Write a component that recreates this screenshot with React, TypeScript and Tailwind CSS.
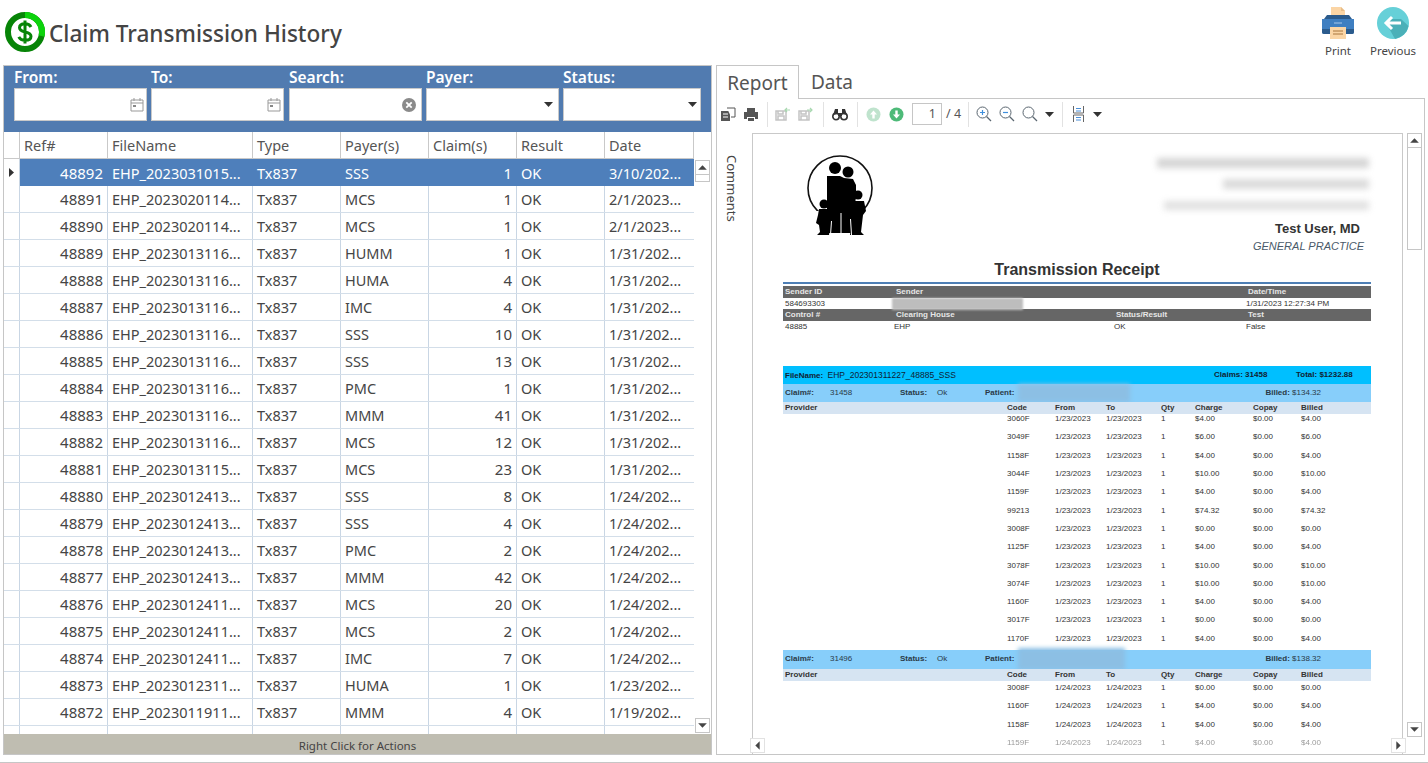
type Row = { ref: number; file: string; payer: string; claims: number; date: string };

const ROWS: Row[] = [
  { ref: 48892, file: "EHP_2023031015...", payer: "SSS", claims: 1, date: "3/10/202..." },
  { ref: 48891, file: "EHP_2023020114...", payer: "MCS", claims: 1, date: "2/1/2023..." },
  { ref: 48890, file: "EHP_2023020114...", payer: "MCS", claims: 1, date: "2/1/2023..." },
  { ref: 48889, file: "EHP_2023013116...", payer: "HUMM", claims: 1, date: "1/31/202..." },
  { ref: 48888, file: "EHP_2023013116...", payer: "HUMA", claims: 4, date: "1/31/202..." },
  { ref: 48887, file: "EHP_2023013116...", payer: "IMC", claims: 4, date: "1/31/202..." },
  { ref: 48886, file: "EHP_2023013116...", payer: "SSS", claims: 10, date: "1/31/202..." },
  { ref: 48885, file: "EHP_2023013116...", payer: "SSS", claims: 13, date: "1/31/202..." },
  { ref: 48884, file: "EHP_2023013116...", payer: "PMC", claims: 1, date: "1/31/202..." },
  { ref: 48883, file: "EHP_2023013116...", payer: "MMM", claims: 41, date: "1/31/202..." },
  { ref: 48882, file: "EHP_2023013116...", payer: "MCS", claims: 12, date: "1/31/202..." },
  { ref: 48881, file: "EHP_2023013115...", payer: "MCS", claims: 23, date: "1/31/202..." },
  { ref: 48880, file: "EHP_2023012413...", payer: "SSS", claims: 8, date: "1/24/202..." },
  { ref: 48879, file: "EHP_2023012413...", payer: "SSS", claims: 4, date: "1/24/202..." },
  { ref: 48878, file: "EHP_2023012413...", payer: "PMC", claims: 2, date: "1/24/202..." },
  { ref: 48877, file: "EHP_2023012413...", payer: "MMM", claims: 42, date: "1/24/202..." },
  { ref: 48876, file: "EHP_2023012411...", payer: "MCS", claims: 20, date: "1/24/202..." },
  { ref: 48875, file: "EHP_2023012411...", payer: "MCS", claims: 2, date: "1/24/202..." },
  { ref: 48874, file: "EHP_2023012411...", payer: "IMC", claims: 7, date: "1/24/202..." },
  { ref: 48873, file: "EHP_2023012311...", payer: "HUMA", claims: 1, date: "1/23/202..." },
  { ref: 48872, file: "EHP_2023011911...", payer: "MMM", claims: 4, date: "1/19/202..." },
];

type Item = [string, string, string, string];

const ITEMS_A: Item[] = [
  ["3060F", "$4.00", "$0.00", "$4.00"],
  ["3049F", "$6.00", "$0.00", "$6.00"],
  ["1158F", "$4.00", "$0.00", "$4.00"],
  ["3044F", "$10.00", "$0.00", "$10.00"],
  ["1159F", "$4.00", "$0.00", "$4.00"],
  ["99213", "$74.32", "$0.00", "$74.32"],
  ["3008F", "$0.00", "$0.00", "$0.00"],
  ["1125F", "$4.00", "$0.00", "$4.00"],
  ["3078F", "$10.00", "$0.00", "$10.00"],
  ["3074F", "$10.00", "$0.00", "$10.00"],
  ["1160F", "$4.00", "$0.00", "$4.00"],
  ["3017F", "$0.00", "$0.00", "$0.00"],
  ["1170F", "$4.00", "$0.00", "$4.00"],
];

const ITEMS_B: Item[] = [
  ["3008F", "$0.00", "$0.00", "$0.00"],
  ["1160F", "$4.00", "$0.00", "$4.00"],
  ["1158F", "$4.00", "$0.00", "$4.00"],
  ["1159F", "$4.00", "$0.00", "$4.00"],
];

const CaretDown = () => (
  <svg width="9" height="5" viewBox="0 0 9 5" className="shrink-0">
    <path d="M0 0h9L4.5 5z" fill="#333" />
  </svg>
);

const Sep = () => <div className="w-px h-[25px] bg-[#e2e2e2] shrink-0" />;

const DollarLogo = () => (
  <svg width="40" height="40" viewBox="0 0 40 40" className="shrink-0">
    <circle cx="20" cy="20" r="17" fill="#fff" stroke="#078407" strokeWidth="6" />
    <path d="M20 3a17 17 0 0 1 16.5 21" fill="none" stroke="#0cd30c" strokeWidth="6" />
    <path
      d="M26 15c-1-2-3-3.200-6-3.200-3.500 0-5.500 1.700-5.500 4 0 5.600 11.500 2.800 11.500 8.500 0 2.600-2.300 4-5.800 4-3.200 0-5.400-1.200-6.400-3.400M20 8.500v23"
      fill="none"
      stroke="#078407"
      strokeWidth="3"
    />
  </svg>
);

const PrintIcon = () => (
  <svg width="32" height="32" viewBox="0 0 32 32">
    <path d="M9 0h10l4 4v10H9z" fill="#fbd5a5" />
    <path d="M19 0l4 4h-4z" fill="#e8bd88" />
    <path d="M5 8h22l3 4H2z" fill="#2b5b8c" />
    <path d="M0 12h32v13a2 2 0 0 1-2 2H2a2 2 0 0 1-2-2z" fill="#3f7fc1" />
    <path d="M0 22h32v3a2 2 0 0 1-2 2H2a2 2 0 0 1-2-2z" fill="#2b5b8c" />
    <path d="M8 20h16v12H8z" fill="#fbd5a5" />
    <path d="M11 24h10M11 27h10" stroke="#a9773f" />
    <path d="M12 16h8" stroke="#a9c9ea" />
  </svg>
);

const PreviousIcon = () => (
  <svg width="32" height="32" viewBox="0 0 32 32">
    <circle cx="16" cy="16" r="16" fill="#66d0d8" />
    <path d="M9 16l9 15.900A16 16 0 0 0 31.500 19L24 12H14z" fill="#4bb0b8" />
    <path d="M15 10l-6 6 6 6M10 16h14" fill="none" stroke="#fff" strokeWidth="3" />
  </svg>
);

const CalendarIcon = () => (
  <svg width="14" height="15" viewBox="0 0 14 15">
    <path d="M1 3h12v11H1zM1 6h12M4 1v3M10 1v3" fill="none" stroke="#999" />
    <rect x="3" y="8" width="3" height="2" fill="#888" />
  </svg>
);

const ClearIcon = () => (
  <svg width="14" height="14" viewBox="0 0 14 14">
    <circle cx="7" cy="7" r="7" fill="#8a8a8a" />
    <path d="M4.300 4.300l5.400 5.400M9.700 4.300l-5.400 5.400" stroke="#fff" strokeWidth="1.800" />
  </svg>
);

const FamilyLogo = () => (
  <svg width="68" height="82" viewBox="0 0 68 82">
    <circle cx="33" cy="33" r="32" fill="none" stroke="#111" strokeWidth="1.600" />
    <rect x="0" y="56" width="12" height="26" fill="#fff" />
    <rect x="56" y="56" width="12" height="26" fill="#fff" />
    <g fill="#000">
      <circle cx="28" cy="13" r="6" />
      <circle cx="41" cy="17" r="5.500" />
      <path d="M20 21h13l4 2 9 1 3 6v12l-5 36H20z" />
      <circle cx="51" cy="40" r="4.500" />
      <path d="M46 46h11l2 10-3 4-2 17 3 3H43z" />
      <circle cx="17" cy="49" r="4.500" />
      <path d="M12 54h9l3 12-2 14H10l3-3-1-7-3-2 2-8z" />
    </g>
    <path d="M24.500 66l-1 14M43.500 64l1 16M34 58v20" stroke="#fff" strokeWidth="1" />
  </svg>
);

const UpDownCircle = ({ up, fill }: { up: boolean; fill: string }) => (
  <svg width="15" height="15" viewBox="0 0 15 15" className="shrink-0">
    <circle cx="7.500" cy="7.500" r="7" fill={fill} />
    <path d={up ? "M7.500 3.500l-3.500 4h2.300v4h2.400v-4H11z" : "M7.500 11.500l-3.500-4h2.300v-4h2.400v4H11z"} fill="#fff" />
  </svg>
);

const ExportIcon = ({ right }: { right?: boolean }) => (
  <svg width="16" height="14" viewBox="0 0 16 14" className="shrink-0">
    <path d="M1 4h10v9H1zM3 4v3h5V4M3 13V9h6v4" fill="none" stroke="#c4c4c4" strokeWidth="1.500" />
    <path d={right ? "M9 3h5M12 1l2 2-2 2" : "M15 3h-5M12 1l-2 2 2 2"} fill="none" stroke="#a8d8b0" strokeWidth="1.200" />
  </svg>
);

const Magnifier = ({ mark }: { mark?: "plus" | "minus" }) => (
  <svg width="16" height="16" viewBox="0 0 16 16" className="shrink-0">
    <circle cx="6.500" cy="6.500" r="5.500" fill="none" stroke="#5a6670" />
    <path d="M10.500 10.500L15 15" stroke="#5a6670" strokeWidth="1.300" />
    {mark && <path d={mark === "plus" ? "M4 6.500h5M6.500 4v5" : "M4 6.500h5"} stroke="#3f8fdc" strokeWidth="1.200" />}
  </svg>
);

const BinocularsIcon = () => (
  <svg width="16" height="14" viewBox="0 0 16 14" className="shrink-0">
    <circle cx="4" cy="9.500" r="3.200" fill="none" stroke="#333" strokeWidth="1.600" />
    <circle cx="12" cy="9.500" r="3.200" fill="none" stroke="#333" strokeWidth="1.600" />
    <path d="M1 8l2-6h3v5M15 8l-2-6h-3v5M6 6h4v3H6z" fill="#333" />
  </svg>
);

const ScrollBtn = ({ dir, className }: { dir: "up" | "down" | "left" | "right"; className?: string }) => {
  const d = {
    up: "M4 10h8L8 6z",
    down: "M4 6h8l-4 4z",
    left: "M10 4v8L6 8z",
    right: "M6 4v8l4-4z",
  }[dir];
  return (
    <div className={`w-[15px] h-[15px] border border-[#c6c6c6] bg-white flex items-center justify-center ${className ?? ""}`}>
      <svg width="13" height="13" viewBox="2 2 12 12">
        <path d={d} fill="#444" />
      </svg>
    </div>
  );
};

const Field = ({ label, className, children }: { label: string; className: string; children?: React.ReactNode }) => (
  <div className="flex flex-col">
    <span className="text-[15.5px] leading-[21px] font-semibold text-white">{label}</span>
    <div className={`h-[33px] bg-white border border-[#c9c9c9] flex items-center justify-end ${className}`}>{children}</div>
  </div>
);

const DataRow = ({ row, selected }: { row?: Row; selected?: boolean }) => {
  const cell = `${selected ? "border-[#4e7fbb]" : "border-[#c9d6e4]"} border-r h-full flex items-center px-[4px] overflow-hidden whitespace-nowrap shrink-0`;
  return (
    <div className={`flex h-[27px] shrink-0 ${selected ? "bg-[#4e7fbb] text-white" : "border-b border-[#d3dee9] text-[#454545]"}`}>
      <div className="w-[16px] h-full shrink-0 bg-white border-r border-[#c9d6e4] flex items-center pl-[5px]">
        {selected && (
          <svg width="5" height="9" viewBox="0 0 5 9" className="shrink-0">
            <path d="M0 0l5 4.500L0 9z" fill="#333" />
          </svg>
        )}
      </div>
      <div className={`${cell} w-[88px] justify-end text-[15px] pt-[1px]`}>{row?.ref}</div>
      <div className={`${cell} w-[145px] pt-[2px]`}>{row?.file}</div>
      <div className={`${cell} w-[88px] pt-[2px]`}>{row && "Tx837"}</div>
      <div className={`${cell} w-[88px] pt-[2px]`}>{row?.payer}</div>
      <div className={`${cell} w-[88px] justify-end text-[15px] pt-[1px]`}>{row?.claims}</div>
      <div className={`${cell} w-[88px] pt-[2px]`}>{row && "OK"}</div>
      <div className={`${cell} w-[88px] pt-[2px] border-r-0`}>{row?.date}</div>
    </div>
  );
};

const HeadCell = ({ label, width }: { label: string; width: string }) => (
  <div className={`${width} shrink-0 h-full border-r border-[#c9c9c9] flex items-center px-[4px] pt-[2px]`}>{label}</div>
);

const DocHeadRow = ({ cells }: { cells: [string, string][] }) => (
  <div className="flex h-[12px] bg-[#666666] items-center font-bold text-[#e6e6e6] w-[588px]">
    {cells.map(([label, w]) => (
      <span key={label} className={`${w} pl-[2px] shrink-0`}>
        {label}
      </span>
    ))}
  </div>
);

const ClaimBar = ({ num, billed, height, blur }: { num: string; billed: string; height: string; blur: string }) => (
  <div className={`flex ${height} bg-[#87cefa] items-center text-[#2a3a48] font-bold w-[588px]`}>
    <span className="w-[47px] pl-[2px] shrink-0">Claim#:</span>
    <span className="w-[70px] shrink-0 font-normal">{num}</span>
    <span className="w-[37px] shrink-0">Status:</span>
    <span className="w-[48px] shrink-0 font-normal">Ok</span>
    <span className="w-[33px] shrink-0">Patient:</span>
    <div className={`${blur} bg-[#8cbfe4] blur-[2px] shrink-0`} />
    <span className="ml-auto mr-[50px]">
      Billed: <span className="font-normal">{billed}</span>
    </span>
  </div>
);

const ProviderBar = () => (
  <div className="flex h-[12px] bg-[#d6e4f2] items-center font-bold text-[#333] w-[588px] relative">
    <span className="w-[224px] pl-[2px] shrink-0">Provider</span>
    <span className="w-[48px] shrink-0">Code</span>
    <span className="w-[51px] shrink-0">From</span>
    <span className="w-[55px] shrink-0">To</span>
    <span className="w-[34px] shrink-0">Qty</span>
    <span className="w-[58px] shrink-0">Charge</span>
    <span className="w-[48px] shrink-0">Copay</span>
    <span>Billed</span>
  </div>
);

const ItemRow = ({ item, date, faded }: { item: Item; date: string; faded?: boolean }) => (
  <div className={`flex h-[18.3px] items-center w-[588px] text-[#333] ${faded ? "opacity-50" : ""}`}>
    <span className="w-[224px] shrink-0" />
    <span className="w-[48px] shrink-0">{item[0]}</span>
    <span className="w-[51px] shrink-0">{date}</span>
    <span className="w-[55px] shrink-0">{date}</span>
    <span className="w-[34px] shrink-0">1</span>
    <span className="w-[58px] shrink-0">{item[1]}</span>
    <span className="w-[48px] shrink-0">{item[2]}</span>
    <span>{item[3]}</span>
  </div>
);

const ReportPage = () => (
  <div className="w-[651px] h-[621px] shrink-0 bg-white border-t border-l border-r border-[#c9c9c9] overflow-hidden pl-[30px] font-['Liberation_Sans',sans-serif] text-[8px] leading-none">
    <div className="flex h-[98px] w-[588px] relative">
      <div className="ml-[24px] mt-[21px]">
        <FamilyLogo />
      </div>
      <div className="absolute left-[368px] top-[16px] w-[218px] h-[66px] flex flex-col items-end justify-around pt-[2px] blur-[3px] opacity-35">
        <div className="w-[212px] h-[10px] bg-[#888]" />
        <div className="w-[146px] h-[10px] bg-[#999]" />
        <div className="w-[205px] h-[9px] bg-[#aaa]" />
      </div>
      <div className="absolute right-[11px] top-[88px] text-[13px] font-bold text-[#333]">Test User, MD</div>
    </div>
    <div className="w-[588px] text-right pr-[7px] text-[11px] italic text-[#4a5a6a] mt-[9px] h-[15px]">GENERAL PRACTICE</div>
    <div className="w-[588px] text-center text-[16px] font-bold text-[#333] mt-[6px] h-[19px]">Transmission Receipt</div>
    <div className="w-[588px] h-[2px] bg-[#4e7fb5] mt-[1px] mb-[2px]" />
    <DocHeadRow cells={[["Sender ID", "w-[111px]"], ["Sender", "w-[352px]"], ["Date/Time", "w-[120px]"]]} />
    <div className="flex h-[11px] items-center w-[588px] text-[#333]">
      <span className="w-[109px] pl-[2px]">584693303</span>
      <div className="w-[131px] h-[12px] bg-[#bdbdbd] blur-[1px]" />
      <span className="ml-[223px]">1/31/2023 12:27:34 PM</span>
    </div>
    <DocHeadRow cells={[["Control #", "w-[111px]"], ["Clearing House", "w-[220px]"], ["Status/Result", "w-[132px]"], ["Test", "w-[100px]"]]} />
    <div className="flex h-[11px] items-center w-[588px] text-[#333]">
      <span className="w-[111px] pl-[2px]">48885</span>
      <span className="w-[220px]">EHP</span>
      <span className="w-[132px]">OK</span>
      <span>False</span>
    </div>
    <div className="flex h-[18px] bg-[#00bfff] items-center font-bold text-[#123] w-[588px] mt-[34px]">
      <span className="pl-[2px] w-[300px]">
        FileName: <span className="font-normal text-[8.5px] ml-[2px]">EHP_202301311227_48885_SSS</span>
      </span>
      <span className="ml-[131px] w-[82px]">Claims: 31458</span>
      <span>Total: $1232.88</span>
    </div>
    <ClaimBar num="31458" billed="$134.32" height="h-[18px]" blur="w-[112px] h-[18px]" />
    <ProviderBar />
    <div className="-mt-[4px]">
      {ITEMS_A.map((item) => (
        <ItemRow key={item[0]} item={item} date="1/23/2023" />
      ))}
    </div>
    <div className="mt-[2px]">
      <ClaimBar num="31496" billed="$138.32" height="h-[19px]" blur="w-[107px] h-[22px]" />
    </div>
    <ProviderBar />
    <div className="-mt-[2px]">
      {ITEMS_B.map((item, i) => (
        <ItemRow key={item[0]} item={item} date="1/24/2023" faded={i === 3} />
      ))}
    </div>
  </div>
);

export default function App() {
  return (
    <div className="w-[1428px] h-[763px] bg-white overflow-hidden font-['Noto_Sans',sans-serif] text-[#454545] flex flex-col">
      <header className="h-[65px] shrink-0 flex items-start pl-[5px] pt-[12px] pr-[8px]">
        <DollarLogo />
        <h1 className="text-[22.6px] leading-[44px] ml-[4px] font-medium text-[#444]">Claim Transmission History</h1>
        <div className="ml-auto -mt-[5px] flex">
          <div className="flex flex-col items-center w-[54px] mr-[1px]">
            <PrintIcon />
            <span className="text-[11.5px] leading-[18px] mt-[3px]">Print</span>
          </div>
          <div className="flex flex-col items-center w-[54px]">
            <PreviousIcon />
            <span className="text-[11.5px] leading-[18px] mt-[3px]">Previous</span>
          </div>
        </div>
      </header>

      <div className="flex h-[691px] pl-[3px] shrink-0">
        {/* left: history grid */}
        <section className="w-[709px] h-[690px] border border-[#c6c6c6] flex flex-col shrink-0 text-[14.5px]">
          <div className="h-[66px] bg-[#517bb0] flex px-[10px] pt-[1px] gap-[4px] shrink-0">
            <Field label="From:" className="w-[133px] pr-[2px]">
              <CalendarIcon />
            </Field>
            <Field label="To:" className="w-[133px] pr-[2px]">
              <CalendarIcon />
            </Field>
            <div className="ml-[1px]">
              <Field label="Search:" className="w-[133px] pr-[5px]">
                <ClearIcon />
              </Field>
            </div>
            <Field label="Payer:" className="w-[133px] pr-[5px]">
              <CaretDown />
            </Field>
            <Field label="Status:" className="w-[138px] pr-[3px]">
              <CaretDown />
            </Field>
          </div>
          <div className="flex flex-1 min-h-0">
            <div className="w-[690px] flex flex-col shrink-0 overflow-hidden">
              <div className="flex h-[27px] border-b border-[#c9c9c9] shrink-0 text-[#555]">
                <div className="w-[16px] shrink-0 h-full border-r border-[#c9c9c9]" />
                <HeadCell label="Ref#" width="w-[88px]" />
                <HeadCell label="FileName" width="w-[145px]" />
                <HeadCell label="Type" width="w-[88px]" />
                <HeadCell label="Payer(s)" width="w-[88px]" />
                <HeadCell label="Claim(s)" width="w-[88px]" />
                <HeadCell label="Result" width="w-[88px]" />
                <HeadCell label="Date" width="w-[89px]" />
              </div>
              {ROWS.map((row, i) => (
                <DataRow key={row.ref} row={row} selected={i === 0} />
              ))}
              <DataRow />
            </div>
            <div className="flex-1 flex flex-col pt-[28px] pl-[1px] pb-[1px]">
              <ScrollBtn dir="up" />
              <div className="w-[15px] h-[7px] border border-t-0 border-[#c6c6c6]" />
              <ScrollBtn dir="down" className="mt-auto" />
            </div>
          </div>
          <div className="h-[20px] bg-[#bfbdb1] shrink-0 text-center text-[11.5px] leading-[23px] text-[#444]">Right Click for Actions</div>
        </section>

        {/* right: report viewer */}
        <section className="w-[709px] ml-[4px] flex flex-col shrink-0">
          <div className="flex h-[33px] shrink-0 text-[19px] text-[#555] relative z-10">
            <div className="w-[83px] h-[34px] border border-b-0 border-[#c6c6c6] bg-white flex items-center justify-center pt-[2px]">Report</div>
            <div className="w-[54px] ml-[6px] flex items-center justify-center pt-[2px]">Data</div>
          </div>
          <div className="h-[657px] border border-[#c6c6c6] flex flex-col">
            <div className="h-[34px] shrink-0 flex items-center pb-[4px] pl-[3px] text-[12.5px] text-[#555]">
              <svg width="16" height="15" viewBox="0 0 16 15" className="shrink-0">
                <path d="M1 4h9v10H1z" fill="#555" />
                <path d="M7 1h8v9h-4" fill="#fff" stroke="#555" />
                <path d="M3 7h5M3 10h5" stroke="#fff" />
              </svg>
              <svg width="16" height="15" viewBox="0 0 16 15" className="ml-[7px] mr-[8px] shrink-0">
                <path d="M4 1h8v4H4zM1 5h14v7h-3v-2H4v2H1zM5 11h6v3H5z" fill="#555" />
              </svg>
              <Sep />
              <div className="ml-[7px] mr-[7px]">
                <ExportIcon />
              </div>
              <ExportIcon right />
              <div className="ml-[9px]">
                <Sep />
              </div>
              <div className="ml-[8px] mr-[9px]">
                <BinocularsIcon />
              </div>
              <Sep />
              <div className="ml-[8px] mr-[8px]">
                <UpDownCircle up fill="#bfe3cd" />
              </div>
              <UpDownCircle up={false} fill="#4dba78" />
              <div className="w-[30px] h-[22px] ml-[8px] border border-[#c6c6c6] flex items-center justify-end pr-[5px] shrink-0">1</div>
              <span className="ml-[4px] mr-[4px] w-[18px] shrink-0">/ 4</span>
              <Sep />
              <div className="ml-[7px]">
                <Magnifier mark="plus" />
              </div>
              <div className="ml-[7px]">
                <Magnifier mark="minus" />
              </div>
              <div className="ml-[7px] mr-[7px]">
                <Magnifier />
              </div>
              <CaretDown />
              <div className="ml-[8px]">
                <Sep />
              </div>
              <svg width="13" height="16" viewBox="0 0 13 16" className="ml-[9px] mr-[8px] shrink-0">
                <path d="M1.500 0v7h10V0M1.500 16v-7h10v7" fill="none" stroke="#666" />
                <path d="M4 2.500h5M4 5h5M4 11.500h5M4 14h5" stroke="#4a90d9" />
              </svg>
              <CaretDown />
            </div>
            <div className="flex flex-1 min-h-0 relative">
              <div className="w-[35px] shrink-0 flex justify-center pt-[22px] pr-[6px]">
                <span className="[writing-mode:vertical-rl] text-[13px] h-fit">Comments</span>
              </div>
              <ReportPage />
              <div className="flex-1 flex flex-col pl-[4px] pb-[17px]">
                <ScrollBtn dir="up" />
                <div className="w-[15px] h-[102px] border border-t-0 border-[#c6c6c6]" />
                <ScrollBtn dir="down" className="mt-auto" />
              </div>
              {/* horizontal scroll buttons float over the page */}
              <ScrollBtn dir="left" className="absolute left-[33px] bottom-[1px] border-[#e2e2e2]" />
              <ScrollBtn dir="right" className="absolute left-[674px] bottom-[1px] border-[#e2e2e2]" />
            </div>
          </div>
        </section>
      </div>
      <div className="h-px bg-[#c6c6c6] mt-[6px]" />
    </div>
  );
}
